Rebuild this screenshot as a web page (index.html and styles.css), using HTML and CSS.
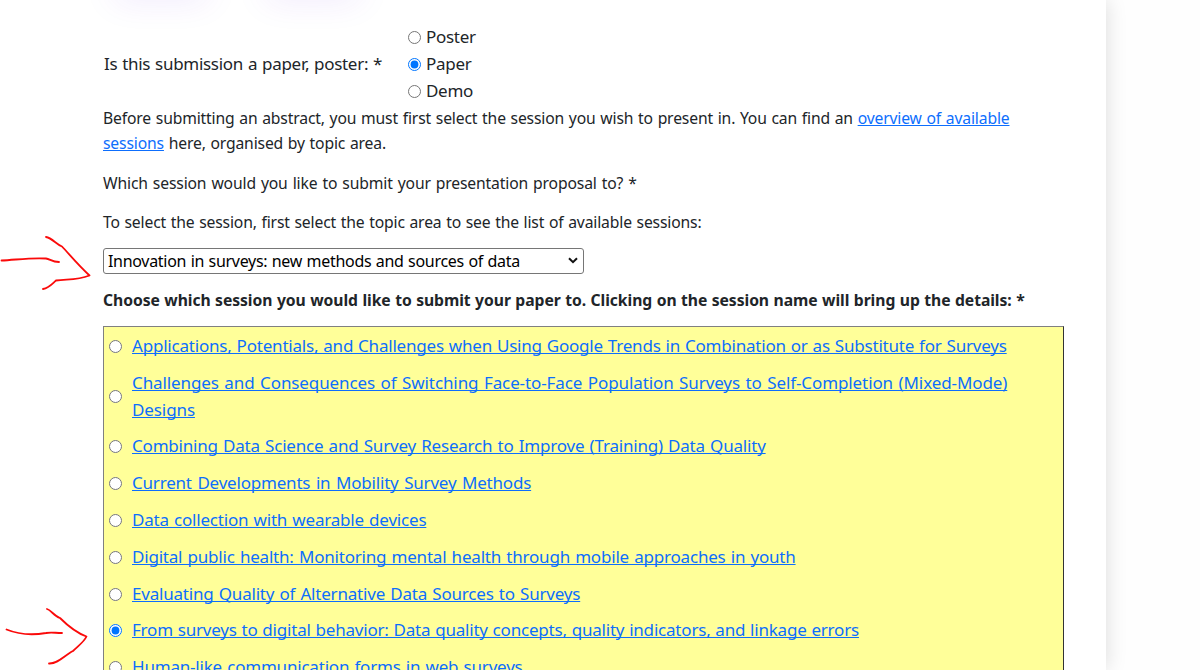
FILE: index.html
```html
<!DOCTYPE html>
<html lang="en">

<head>
    <meta charset="UTF-8">
    <meta name="viewport" content="width=device-width, initial-scale=1.0">
    <title>Submit an abstract</title>
    <link rel="stylesheet" href="styles.css">
</head>

<body>
    <div class="page">
        <div class="tabs">
            <div class="tab"></div>
            <div class="tab"></div>
        </div>

        <form class="content">
            <div class="type-row">
                <div class="type-label">Is this submission a paper, poster: *</div>
                <div class="type-options">
                    <label><input type="radio" name="type"><span>Poster</span></label>
                    <label><input type="radio" name="type" checked><span>Paper</span></label>
                    <label><input type="radio" name="type"><span>Demo</span></label>
                </div>
            </div>

            <p class="intro">Before submitting an abstract, you must first select the session you wish to present in. You can find an <a href="#">overview of available<br>sessions</a> here, organised by topic area.</p>
            <p class="question">Which session would you like to submit your presentation proposal to? *</p>
            <p class="hint">To select the session, first select the topic area to see the list of available sessions:</p>

            <div class="topic">
                <select class="topic-select">
                    <option>Innovation in surveys: new methods and sources of data</option>
                </select>
                <svg class="topic-arrow" width="10" height="7" viewBox="0 0 10 7">
                    <path d="M1 1.2 L5 5.2 L9 1.2" />
                </svg>
            </div>

            <p class="choose">Choose which session you would like to submit your paper to. Clicking on the session name will bring up the details: *</p>

            <div class="sessions">
                <div class="session"><input type="radio" name="session"><a class="s1" href="#">Applications, Potentials, and Challenges when Using Google Trends in Combination or as Substitute for Surveys</a></div>
                <div class="session"><input type="radio" name="session"><a class="s2" href="#">Challenges and Consequences of Switching Face-to-Face Population Surveys to Self-Completion (Mixed-Mode)<br>Designs</a></div>
                <div class="session"><input type="radio" name="session"><a class="s3" href="#">Combining Data Science and Survey Research to Improve (Training) Data Quality</a></div>
                <div class="session"><input type="radio" name="session"><a class="s4" href="#">Current Developments in Mobility Survey Methods</a></div>
                <div class="session"><input type="radio" name="session"><a class="s5" href="#">Data collection with wearable devices</a></div>
                <div class="session"><input type="radio" name="session"><a class="s6" href="#">Digital public health: Monitoring mental health through mobile approaches in youth</a></div>
                <div class="session"><input type="radio" name="session"><a class="s7" href="#">Evaluating Quality of Alternative Data Sources to Surveys</a></div>
                <div class="session"><input type="radio" name="session" checked><a class="s8" href="#">From surveys to digital behavior: Data quality concepts, quality indicators, and linkage errors</a></div>
                <div class="session"><input type="radio" name="session"><a class="s9" href="#">Human-like communication forms in web surveys</a></div>
            </div>
        </form>
    </div>

    <!-- hand drawn arrows -->
    <svg class="marks" width="100" height="670" viewBox="0 0 100 670">
        <path d="M1.500 260.500 C15 260 30 257.500 46 258.500 C50 259 52 262 59 262" />
        <path d="M46 237 C52 238 56 244 62 246.500 C70 255 78 265 89.500 275.500 C77 280.500 68 279 56 280.500 C52 284 49 288 43 289" />
        <path d="M6.500 629.500 C20 635 34 635 46 633 C51 632 55 633 62 633" />
        <path d="M47 609 C51 610 54 616 60 618 C68 626 77 633 86.500 636.500 C84 642 78 646 73 651 C65 655 58 664 49 663.500" />
    </svg>
</body>

</html>
```

FILE: styles.css
```css
body {
    margin: 0;
    height: 670px;
    overflow: hidden;
    background-color: #fefefe;
    font-family: "Noto Sans", sans-serif;
    font-size: 15.7px;
    letter-spacing: -0.15px;
    color: #212529;
}

.page {
    width: 1105.5px;
    height: 670px;
    background-color: #fff;
    box-shadow: 0 0 20px rgba(0, 0, 0, 0.14);
}

.tabs {
    display: flex;
    gap: 60px;
    height: 24px;
    padding-left: 115px;
}

.tab {
    width: 92px;
    height: 20px;
    margin-top: -26px;
    box-shadow: 0 4px 34px rgba(110, 40, 230, 0.13);
}

.content {
    width: 961px;
    margin-left: 103px;
}

.content p {
    margin: 0;
    line-height: 25px;
    white-space: nowrap;
}

a {
    color: #0d6efd;
    text-decoration: underline;
    text-decoration-skip-ink: none;
    text-underline-offset: 1px;
}

input[type="radio"] {
    flex: none;
    width: 13px;
    height: 13px;
    margin: 0;
}

.type-row {
    display: flex;
    align-items: center;
    height: 81px;
    font-size: 17px;
    line-height: 27px;
    white-space: nowrap;
    letter-spacing: -0.3px;
}

.type-label {
    width: 304.5px;
    padding: 0 0 2px 1px;
    box-sizing: border-box;
    word-spacing: 0.8px;
}

.type-options label {
    display: flex;
    align-items: center;
    gap: 5.5px;
    height: 27px;
}

.type-options span {
    padding-bottom: 2px;
}

.content .intro {
    margin-top: 1px;
    word-spacing: 0.8px;
}

.content .question {
    margin-top: 15px;
    word-spacing: 1.1px;
}

.content .hint {
    margin-top: 14px;
    word-spacing: 0.75px;
}

.topic {
    position: relative;
    width: 480px;
    height: 26px;
    margin-top: 13px;
}

.topic-select {
    appearance: none;
    display: block;
    width: 481px;
    height: 26px;
    padding: 0 4px;
    border: 1px solid #767676;
    border-radius: 3px;
    background-color: #fff;
    font-family: inherit;
    font-size: 16px;
    letter-spacing: -0.3px;
    word-spacing: 0.65px;
    color: #000;
}

.topic-arrow {
    position: absolute;
    top: 9px;
    right: 5px;
    fill: none;
    stroke: #111;
    stroke-width: 2;
}

.content .choose {
    margin-top: 14px;
    font-weight: 700;
    letter-spacing: -0.06px;
    word-spacing: 0.5px;
}

.sessions {
    height: 342px;
    margin-top: 13px;
    padding: 1px 0 0 5px;
    border: 1px solid #808080;
    border-right-color: #333;
    border-bottom: none;
    background-color: #ffff99;
    font-size: 17px;
}

.session {
    display: flex;
    align-items: center;
    gap: 10px;
    padding: 4.9px 0;
    line-height: 27px;
    white-space: nowrap;
    letter-spacing: -0.2px;
    word-spacing: 1px;
}

.session a {
    margin: -1px 0 1px;
}

.s1 {
    word-spacing: 0.7px;
}

.s2 {
    letter-spacing: -0.1px;
    word-spacing: 1.2px;
}

.s4 {
    word-spacing: 1.4px;
}

.s8 {
    word-spacing: 0.6px;
}

.marks {
    position: absolute;
    top: 0;
    left: 0;
    fill: none;
    stroke: #fa0a0a;
    stroke-width: 1.8;
    stroke-linecap: round;
    stroke-linejoin: round;
}
```
